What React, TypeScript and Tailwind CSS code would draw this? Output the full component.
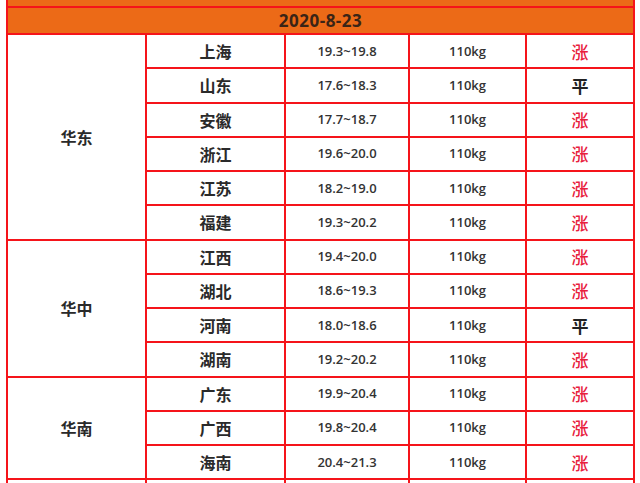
const regions = [
  {
    name: "华东",
    rows: [
      ["上海", "19.3~19.8", "涨"],
      ["山东", "17.6~18.3", "平"],
      ["安徽", "17.7~18.7", "涨"],
      ["浙江", "19.6~20.0", "涨"],
      ["江苏", "18.2~19.0", "涨"],
      ["福建", "19.3~20.2", "涨"],
    ],
  },
  {
    name: "华中",
    rows: [
      ["江西", "19.4~20.0", "涨"],
      ["湖北", "18.6~19.3", "涨"],
      ["河南", "18.0~18.6", "平"],
      ["湖南", "19.2~20.2", "涨"],
    ],
  },
  {
    name: "华南",
    rows: [
      ["广东", "19.9~20.4", "涨"],
      ["广西", "19.8~20.4", "涨"],
      ["海南", "20.4~21.3", "涨"],
    ],
  },
];

const cjk = "font-['Microsoft_YaHei','Noto_Sans_CJK_SC',sans-serif]";
const cell = "border-2 border-[#f5141a] text-center p-0";

export default function App() {
  return (
    <div className="w-[640px] h-[483px] overflow-hidden bg-white">
      <table className="ml-[6px] w-[627px] border-collapse table-fixed">
        <colgroup>
          <col className="w-[139px]" />
          <col className="w-[139px]" />
          <col className="w-[124px]" />
          <col className="w-[117px]" />
          <col className="w-[108px]" />
        </colgroup>
        <tbody>
          <tr className="h-[7px]">
            <td colSpan={5} className="border-x-2 border-b-2 border-[#f5141a] bg-[#ec6a17] p-0" />
          </tr>
          <tr className="h-[27px]">
            <td
              colSpan={5}
              className={`${cell} bg-[#ec6a17] text-[17px] leading-none font-bold text-[#3a2416] font-['Open_Sans','Noto_Sans',sans-serif] tracking-[0.5px]`}
            >
              2020-8-23
            </td>
          </tr>
          {regions.map((r) =>
            r.rows.map((row, i) => (
              <tr key={row[0]} className="h-[34.25px]">
                {i === 0 && (
                  <td rowSpan={r.rows.length} className={`${cell} ${cjk} text-[16px] font-bold text-[#2a2a2a]`}>
                    {r.name}
                  </td>
                )}
                <td className={`${cell} ${cjk} text-[16px] leading-none font-bold text-[#2a2a2a]`}>{row[0]}</td>
                <td className={`${cell} font-['Open_Sans','Noto_Sans',sans-serif] text-[13px] leading-none font-semibold text-[#333]`}>
                  {row[1]}
                </td>
                <td className={`${cell} font-['Open_Sans','Noto_Sans',sans-serif] text-[13px] leading-none font-semibold text-[#333]`}>
                  110kg
                </td>
                <td
                  className={`${cell} ${cjk} text-[17px] leading-none ${
                    row[2] === "涨" ? "text-[#e8203c] font-medium" : "text-[#222] font-bold"
                  }`}
                >
                  {row[2]}
                </td>
              </tr>
            ))
          )}
          <tr className="h-[34px]">
            <td className={cell} />
            <td className={cell} />
            <td className={cell} />
            <td className={cell} />
            <td className={cell} />
          </tr>
        </tbody>
      </table>
    </div>
  );
}
